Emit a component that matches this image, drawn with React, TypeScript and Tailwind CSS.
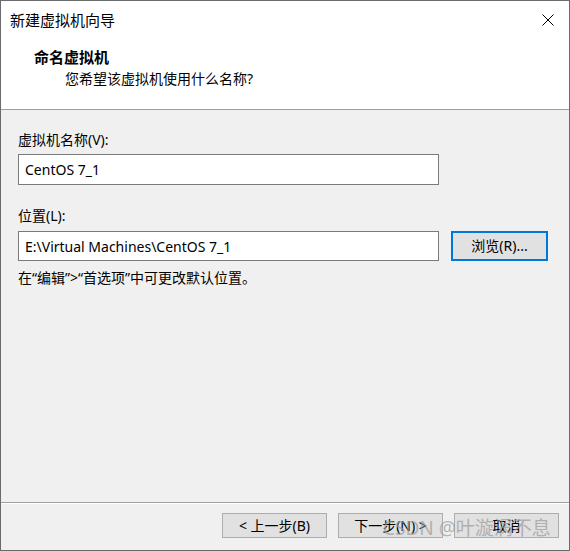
import React from 'react';

const font = "font-['Noto_Sans','Noto_Sans_CJK_SC',sans-serif]";

function WizardButton({ label }: { label: string }) {
    return (
        <button className="h-[25px] w-[105px] border border-[#adadad] bg-[#e1e1e1] text-[14px] leading-none text-black">
            {label}
        </button>
    );
}

export default function App() {
    return (
        <div className={`${font} relative flex h-[551px] w-[570px] flex-col border border-[#6b6b6b] bg-white text-black`}>
            {/* Title bar */}
            <div className="flex h-[38px] items-center justify-between pl-[9px] pr-[15px]">
                <span className="text-[15px] leading-5">新建虚拟机向导</span>
                <svg width="12" height="12" viewBox="0 0 12 12" className="text-black">
                    <path d="M0.5 0.5L11.5 11.5M11.5 0.5L0.5 11.5" stroke="currentColor" strokeWidth="1" fill="none" />
                </svg>
            </div>

            {/* Header */}
            <div className="h-[71px] border-b border-[#a0a0a0] pl-[33px] pt-[8px]">
                <div className="text-[15px] font-bold leading-5">命名虚拟机</div>
                <div className="mt-[2px] pl-[31px] text-[14px] leading-5">您希望该虚拟机使用什么名称?</div>
            </div>

            {/* Body */}
            <div className="flex flex-1 flex-col bg-[#f0f0f0] px-[17px] pt-[20px]">
                <label className="text-[14px] leading-5">虚拟机名称(V):</label>
                <div className="mt-[4px] flex h-[31px] w-[421px] items-center border border-[#7a7a7a] bg-white px-[6px] text-[14px]">
                    CentOS 7_1
                </div>

                <label className="mt-[21px] text-[14px] leading-5">位置(L):</label>
                <div className="mt-[5px] flex items-center gap-[12px]">
                    <div className="flex h-[30px] w-[421px] items-center border border-[#7a7a7a] bg-white px-[6px] text-[14px]">
                        E:\Virtual Machines\CentOS 7_1
                    </div>
                    <button className="h-[30px] w-[97px] border-2 border-[#0078d7] bg-[#e1e1e1] text-[14px] leading-none">
                        浏览(R)...
                    </button>
                </div>

                <div className="mt-[7px] text-[14px] leading-5">在“编辑”&gt;“首选项”中可更改默认位置。</div>
            </div>

            {/* Footer */}
            <div className="flex h-[48px] justify-end gap-[11px] border-t border-[#a0a0a0] bg-[#f0f0f0] pr-[10px] pt-[10px] shadow-[inset_0_1px_0_#ffffff]">
                <WizardButton label="< 上一步(B)" />
                <WizardButton label="下一步(N) >" />
                <WizardButton label="取消" />
            </div>

            {/* Watermark */}
            <div className="pointer-events-none absolute left-[382px] top-[515px] text-[19px] leading-6 text-[#9c9c9c] opacity-70">
                CSDN @叶漩涡不息
            </div>
        </div>
    );
}
